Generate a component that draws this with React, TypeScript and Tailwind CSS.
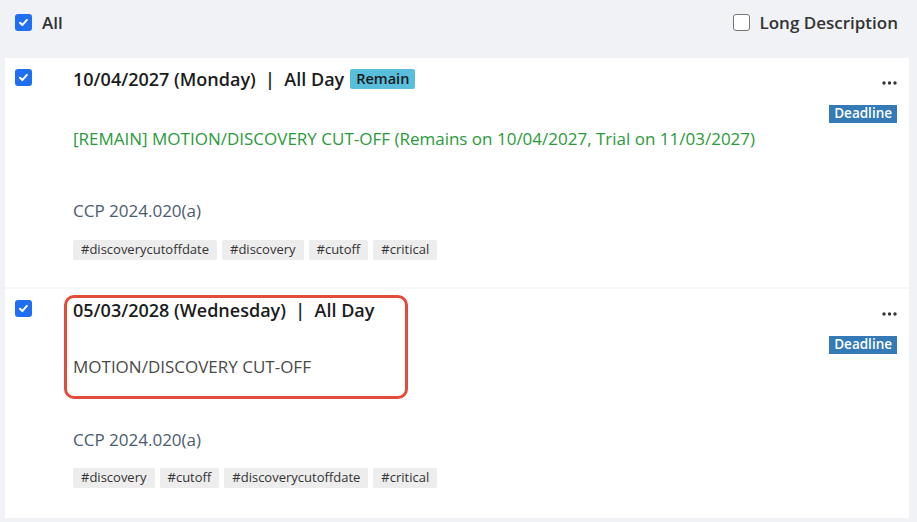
import React from "react";

function Check({ checked }: { checked: boolean }) {
  if (!checked) {
    return (
      <span className="inline-block h-[17px] w-[17px] rounded-[3px] border border-[#767676] bg-white" />
    );
  }
  return (
    <span className="flex h-[17px] w-[17px] items-center justify-center rounded-[3px] bg-[#1f6ff2]">
      <svg width="11" height="11" viewBox="0 0 12 12" fill="none">
        <path d="M2.2 6.3l2.5 2.5 5-5.6" stroke="#fff" strokeWidth="2.2" strokeLinecap="round" strokeLinejoin="round" />
      </svg>
    </span>
  );
}

function Tag({ label }: { label: string }) {
  return (
    <span className="flex h-[20px] items-center rounded-[2px] bg-[#ededed] px-[8px] text-[13px] text-[#333]">
      {label}
    </span>
  );
}

function Dots() {
  return (
    <svg width="15" height="4" viewBox="0 0 15 4">
      <circle cx="2" cy="2" r="1.7" fill="#333" />
      <circle cx="7.5" cy="2" r="1.7" fill="#333" />
      <circle cx="13" cy="2" r="1.7" fill="#333" />
    </svg>
  );
}

interface Item {
  title: string;
  remain?: boolean;
  desc: string;
  tags: string[];
  highlight?: boolean;
}

const items: Item[] = [
  {
    title: "10/04/2027 (Monday)  |  All Day",
    remain: true,
    desc: "[REMAIN] MOTION/DISCOVERY CUT-OFF (Remains on 10/04/2027, Trial on 11/03/2027)",
    tags: ["#discoverycutoffdate", "#discovery", "#cutoff", "#critical"],
  },
  {
    title: "05/03/2028 (Wednesday)  |  All Day",
    desc: "MOTION/DISCOVERY CUT-OFF",
    tags: ["#discovery", "#cutoff", "#discoverycutoffdate", "#critical"],
    highlight: true,
  },
];

function Card({ item, first }: { item: Item; first: boolean }) {
  return (
    <div
      className={
        "flex bg-white pl-[10px] pr-[12px] " +
        (first ? "h-[231px] border-b-2 border-[#f7f7f7] pt-[10px]" : "h-[229px] pt-[10px]")
      }
    >
      <div className="w-[58px] pt-[1px]">
        <Check checked />
      </div>
      <div className="relative flex-1">
        {item.highlight && (
          <div className="pointer-events-none absolute left-[-9px] top-[-4px] h-[104px] w-[344px] rounded-[10px] border-[3px] border-[#e24c3a]" />
        )}
        <div className="flex h-[22px] items-center gap-[6px]">
          <span className="whitespace-pre text-[18px] font-semibold text-[#1c1c1c]">{item.title}</span>
          {item.remain && (
            <span className="flex h-[20px] items-center rounded-[2px] bg-[#59bedc] px-[6px] text-[14.5px] font-semibold text-[#1a1a1a]">
              Remain
            </span>
          )}
        </div>
        {item.remain ? (
          <div className="mt-[38px] h-[22px] text-[17px] leading-[22px] text-[#2a9a3b]">{item.desc}</div>
        ) : (
          <div className="mt-[35px] h-[22px] text-[17px] leading-[22px] text-[#4a4a4a]">{item.desc}</div>
        )}
        <div className={(item.remain ? "mt-[50px]" : "mt-[51px]") + " h-[22px] text-[17px] leading-[22px] text-[#4b5b70]"}>
          CCP 2024.020(a)
        </div>
        <div className={(item.remain ? "mt-[18px]" : "mt-[17px]") + " flex gap-[5px]"}>
          {item.tags.map((t) => (
            <Tag key={t} label={t} />
          ))}
        </div>
      </div>
      <div className="flex flex-col items-end">
        <div className="mt-[13px] flex h-[4px] items-center">
          <Dots />
        </div>
        <span className="mt-[20px] flex h-[18px] items-center bg-[#337ab7] px-[5px] text-[13.5px] font-semibold leading-none text-white">
          Deadline
        </span>
      </div>
    </div>
  );
}

export default function App() {
  return (
    <div
      className="h-[522px] w-[917px] overflow-hidden bg-[#f1f2f6]"
      style={{ fontFamily: '"Open Sans", "Noto Sans", sans-serif' }}
    >
      <div className="flex h-[58px] items-start justify-between pl-[15px] pr-[19px] pt-[10px]">
        <label className="flex items-center gap-[10px]">
          <Check checked />
          <span className="text-[17px] font-semibold text-[#333]">All</span>
        </label>
        <label className="flex items-center gap-[9px]">
          <Check checked={false} />
          <span className="text-[17px] font-semibold text-[#333]">Long Description</span>
        </label>
      </div>
      <div className="ml-[5px] mr-[8px]">
        {items.map((it, i) => (
          <Card key={i} item={it} first={i === 0} />
        ))}
      </div>
    </div>
  );
}
